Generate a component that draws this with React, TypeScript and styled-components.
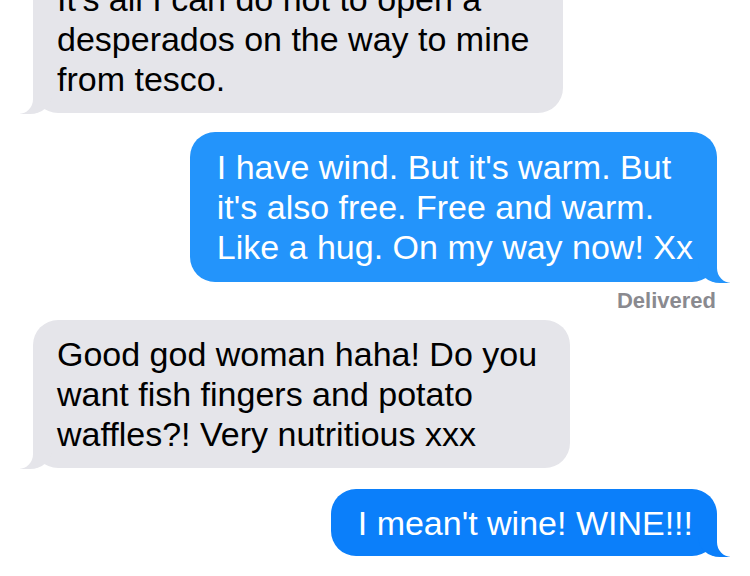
import React from "react";
import styled, { createGlobalStyle } from "styled-components";

const Global = createGlobalStyle`
  html, body { margin: 0; padding: 0; background: #ffffff; }
  body { overflow: hidden; width: 750px; height: 576px; }
`;

const Thread = styled.div`
  display: flex;
  flex-direction: column;
  padding: 0 33px 0 33px;
  margin-top: -35px;
  font-family: "Liberation Sans", Arial, sans-serif;
`;

const Row = styled.div<{ $sent: boolean; $gap: number }>`
  display: flex;
  justify-content: ${(p) => (p.$sent ? "flex-end" : "flex-start")};
  margin-top: ${(p) => p.$gap}px;
`;

const Bubble = styled.div<{ $sent: boolean; $shade?: string; $pad: number }>`
  position: relative;
  background: ${(p) => (p.$sent ? p.$shade || "#1f8ffb" : "#e5e5ea")};
  color: ${(p) => (p.$sent ? "#ffffff" : "#000000")};
  border-radius: 25px;
  padding: ${(p) => p.$pad}px ${(p) => (p.$sent ? "24px" : "33px")} ${(p) => p.$pad}px
    ${(p) => (p.$sent ? "27px" : "24px")};
  font-size: 34px;
  line-height: 40px;
  white-space: nowrap;

  &::before {
    content: "";
    position: absolute;
    bottom: -1px;
    ${(p) => (p.$sent ? "right: -13px;" : "left: -13px;")}
    width: 32px;
    height: 32px;
    background: ${(p) => (p.$sent ? p.$shade || "#1f8ffb" : "#e5e5ea")};
    ${(p) =>
      p.$sent
        ? "border-bottom-left-radius: 22px 20px;"
        : "border-bottom-right-radius: 22px 20px;"}
  }
  &::after {
    content: "";
    position: absolute;
    bottom: -1px;
    ${(p) => (p.$sent ? "right: -30px;" : "left: -30px;")}
    width: 30px;
    height: 33px;
    background: #ffffff;
    ${(p) =>
      p.$sent
        ? "border-bottom-left-radius: 14px 15px;"
        : "border-bottom-right-radius: 14px 15px;"}
  }
`;

const Line = styled.span`
  display: block;
`;

const Status = styled.div`
  align-self: flex-end;
  margin-top: 7px;
  margin-right: 1px;
  font-size: 22px;
  line-height: 24px;
  font-weight: 700;
  color: #8a8a8f;
`;

type Msg = {
  sent: boolean;
  lines: string[];
  gap: number;
  pad: number;
  shade?: string;
};

const messages: Msg[] = [
  {
    sent: false,
    gap: 0,
    pad: 14,
    lines: [
      "It's all I can do not to open a",
      "desperados on the way to mine",
      "from tesco.",
    ],
  },
  {
    sent: true,
    gap: 19,
    pad: 15,
    shade: "#2394fb",
    lines: [
      "I have wind. But it's warm. But",
      "it's also free. Free and warm.",
      "Like a hug. On my way now! Xx",
    ],
  },
  {
    sent: false,
    gap: 7,
    pad: 14,
    lines: [
      "Good god woman haha! Do you",
      "want fish fingers and potato",
      "waffles?! Very nutritious xxx",
    ],
  },
  {
    sent: true,
    gap: 21,
    pad: 13.5,
    shade: "#0b7ffa",
    lines: ["I mean't wine! WINE!!!"],
  },
];

export default function App() {
  return (
    <>
      <Global />
      <Thread>
        {messages.map((m, i) => (
          <React.Fragment key={i}>
            <Row $sent={m.sent} $gap={m.gap}>
              <Bubble $sent={m.sent} $shade={m.shade} $pad={m.pad}>
                {m.lines.map((l, j) => (
                  <Line key={j}>{l}</Line>
                ))}
              </Bubble>
            </Row>
            {i === 1 && <Status>Delivered</Status>}
          </React.Fragment>
        ))}
      </Thread>
    </>
  );
}
